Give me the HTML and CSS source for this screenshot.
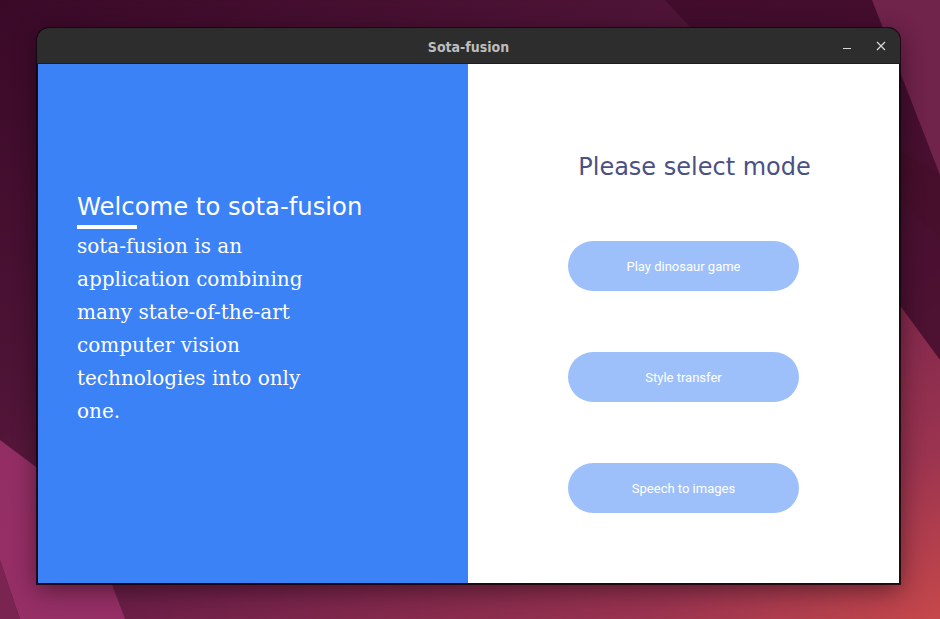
FILE: index.html
```html
<!DOCTYPE html>
<html>
<head>
<meta charset="utf-8">
<title>Sota-fusion</title>
<link rel="stylesheet" href="styles.css">
</head>
<body>
<div class="wallpaper">
  <div class="shape shape-top"></div>
  <div class="shape shape-right-light"></div>
  <div class="shape shape-right-dark"></div>
  <div class="shape shape-left-light"></div>
  <div class="shape shape-left-dark"></div>
</div>
<div class="window">
  <div class="titlebar">
    <span class="title">Sota-fusion</span>
    <div class="controls">
      <svg class="ctl" width="12" height="12" viewBox="0 0 12 12"><path d="M2 8.5h8" stroke="#d8d8d8" stroke-width="1.2"/></svg>
      <svg class="ctl" width="12" height="12" viewBox="0 0 12 12"><path d="M2 2l8 8M10 2l-8 8" stroke="#d8d8d8" stroke-width="1.2"/></svg>
    </div>
  </div>
  <div class="content">
    <section class="left">
      <h1 class="welcome">Welcome to sota-fusion</h1>
      <div class="bar"></div>
      <p class="desc">sota-fusion is an application combining many state-of-the-art computer vision technologies into only one.</p>
    </section>
    <section class="right">
      <h2 class="select">Please select mode</h2>
      <div class="buttons">
        <button class="mode">Play dinosaur game</button>
        <button class="mode">Style transfer</button>
        <button class="mode">Speech to images</button>
      </div>
    </section>
  </div>
</div>
</body>
</html>
```

FILE: styles.css
```css
html, body {
  margin: 0;
  height: 100%;
}
body {
  width: 940px;
  height: 619px;
  overflow: hidden;
  position: relative;
  padding: 28px 0 0 37px;
  box-sizing: border-box;
  background: linear-gradient(150deg, #3a0928 0%, #4f1437 35%, #6e1f48 60%, #9a3350 85%, #c6484a 100%);
}
.wallpaper {
  position: absolute;
  inset: 0;
  z-index: 0;
}
.shape {
  position: absolute;
  inset: 0;
}
.shape-top {
  background: #3f0b2a;
  clip-path: polygon(665px 0, 880px 0, 940px 170px, 940px 360px, 720px 60px);
  opacity: 0.8;
}
.shape-right-light {
  background: #70234b;
  clip-path: polygon(872px 0, 940px 0, 940px 175px);
}
.shape-right-dark {
  background: linear-gradient(180deg, #3e0b25, #5a1638);
  clip-path: polygon(900px 150px, 940px 175px, 940px 240px, 900px 200px);
  opacity: 0.9;
}
.shape-left-light {
  background: linear-gradient(180deg, #8a2a5c, #962f66);
  clip-path: polygon(0 440px, 80px 500px, 125px 619px, 20px 619px, 0 560px);
}
.shape-left-dark {
  background: #7a2452;
  clip-path: polygon(0 560px, 20px 619px, 0 619px);
}
.window {
  position: relative;
  z-index: 1;
  width: 863px;
  height: 556px;
  border-radius: 12px 12px 0 0;
  background: #1b0b12;
  box-shadow: 0 6px 24px rgba(0, 0, 0, 0.45), 0 0 0 1px rgba(20, 5, 12, 0.8);
  display: flex;
  flex-direction: column;
  overflow: hidden;
}
.titlebar {
  height: 36px;
  flex: none;
  background: #2d2d2d;
  border-bottom: 1px solid #1c1c1c;
  border-radius: 12px 12px 0 0;
  display: flex;
  align-items: center;
  justify-content: center;
  position: relative;
  padding-top: 2px;
  box-sizing: border-box;
}
.title {
  font-family: "DejaVu Sans Condensed", "DejaVu Sans", sans-serif;
  font-weight: bold;
  font-size: 14px;
  color: #bdbdbd;
}
.controls {
  position: absolute;
  right: 13px;
  top: 12px;
  display: flex;
  gap: 22px;
}
.ctl {
  display: block;
}
.content {
  flex: 1;
  display: flex;
  margin: 0 1px 1px 1px;
}
.left {
  width: 430px;
  background: #3b82f6;
  padding: 127px 0 0 39px;
  box-sizing: border-box;
  color: #ffffff;
}
.welcome {
  margin: 0;
  font-family: "DejaVu Sans", sans-serif;
  font-weight: normal;
  font-size: 24.3px;
  line-height: 32px;
}
.bar {
  width: 60px;
  height: 4px;
  background: #ffffff;
  margin-top: 2px;
}
.desc {
  margin: 1px 0 0 0;
  width: 250px;
  font-family: "DejaVu Serif", serif;
  font-size: 20px;
  line-height: 33px;
}
.right {
  flex: 1;
  background: #ffffff;
  display: flex;
  flex-direction: column;
  align-items: center;
}
.select {
  margin: 87px 0 0 22px;
  font-family: "DejaVu Sans", sans-serif;
  font-weight: normal;
  font-size: 24px;
  line-height: 32px;
  color: #4b5183;
}
.buttons {
  margin-top: 58px;
  display: flex;
  flex-direction: column;
  gap: 61px;
}
.mode {
  width: 231px;
  height: 50px;
  border: none;
  border-radius: 25px;
  background: #9dc0fa;
  color: #ffffff;
  font-family: Roboto, sans-serif;
  font-size: 13px;
  padding: 0;
}
```
